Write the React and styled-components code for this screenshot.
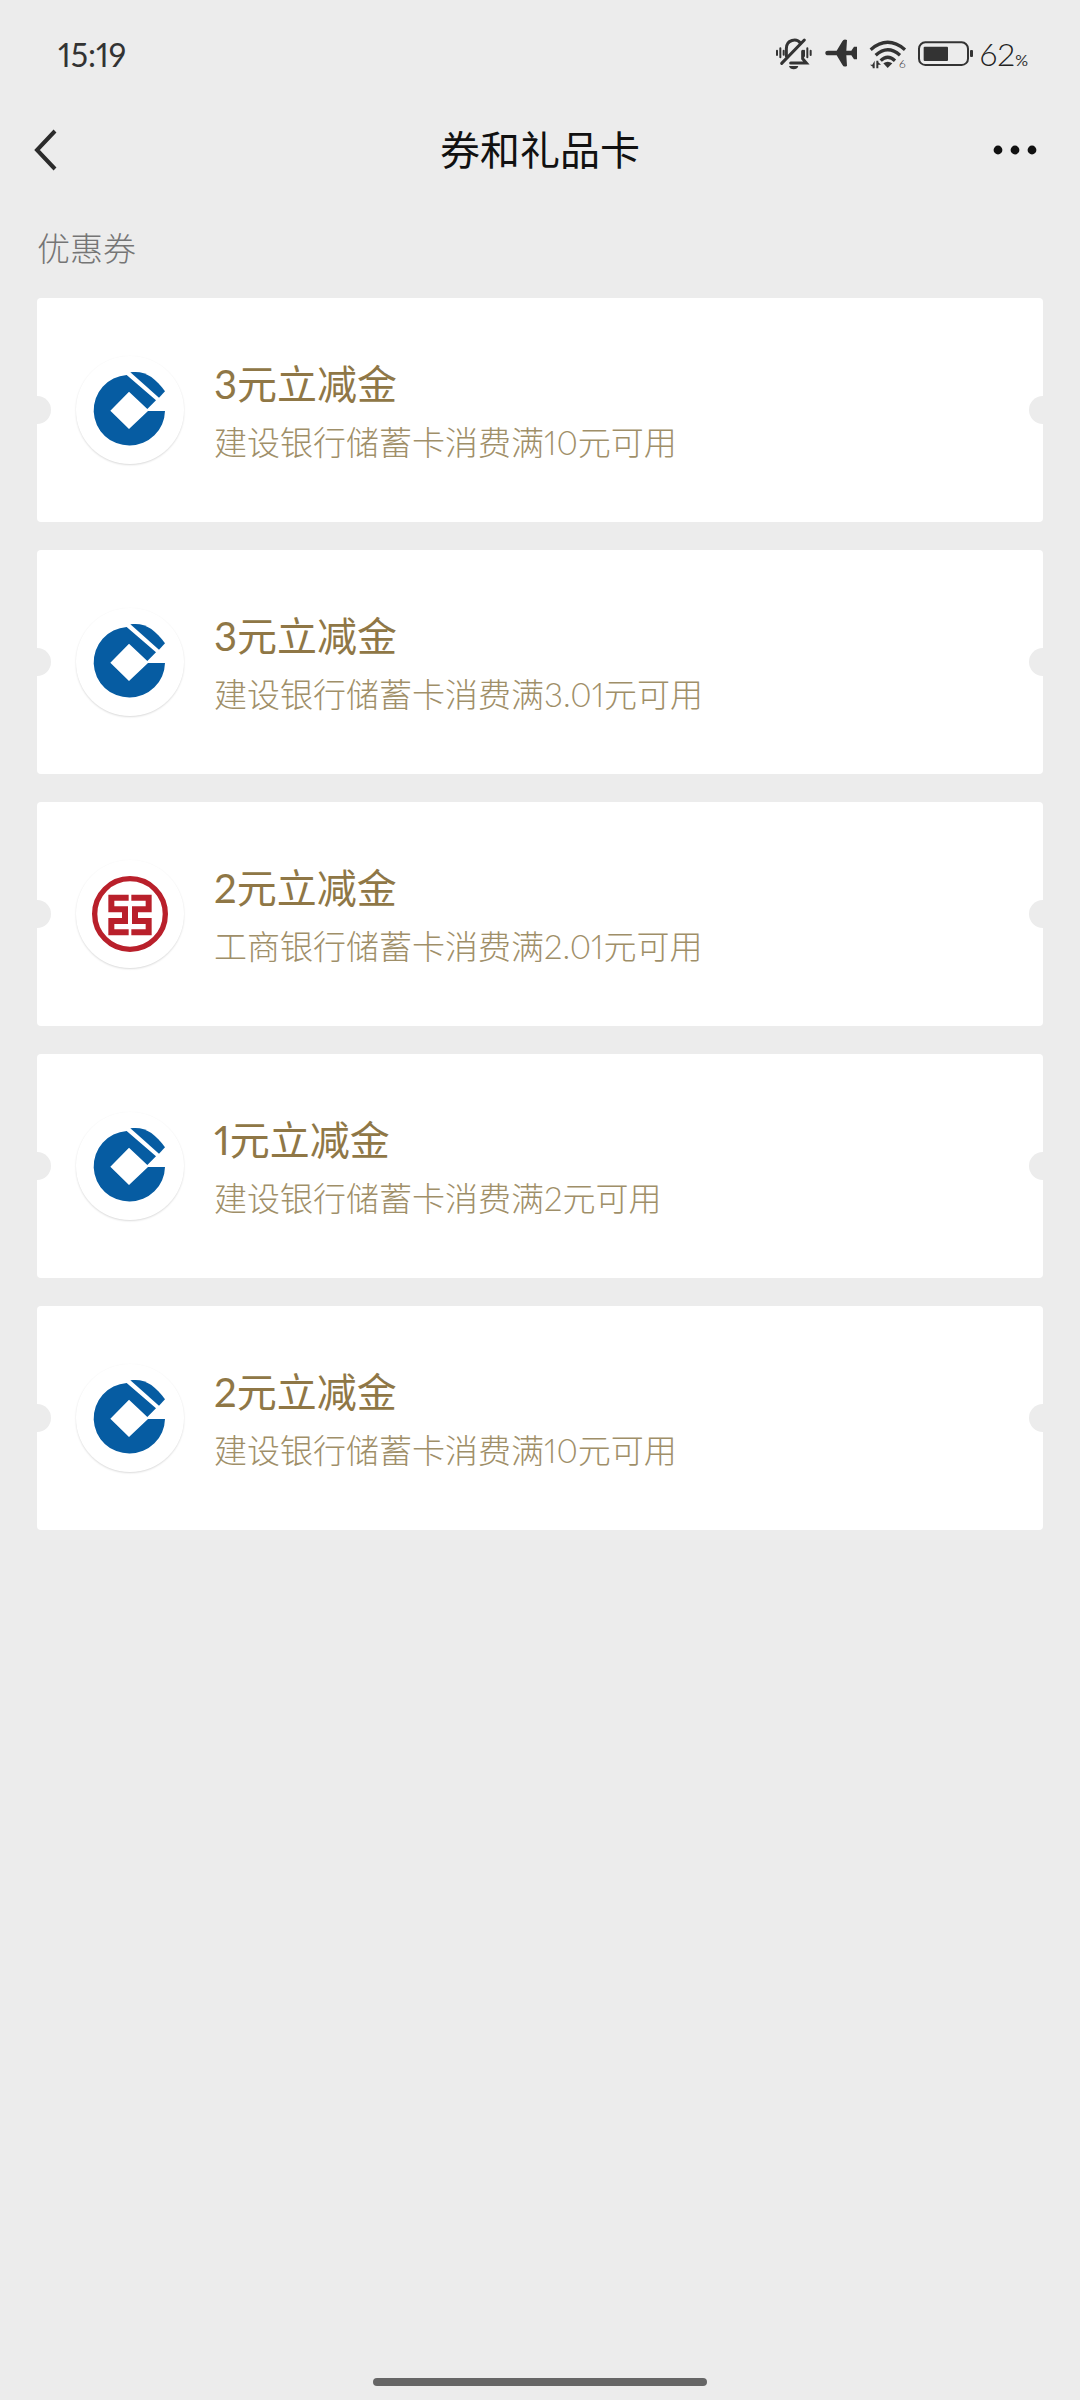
import React from "react";
import styled, { createGlobalStyle } from "styled-components";

const Global = createGlobalStyle`
  *, *::before, *::after { box-sizing: border-box; }
  body {
    margin: 0;
    background: #ececec;
    font-family: Lato, "Noto Sans CJK SC", sans-serif;
    font-feature-settings: "pnum";
  }
  h1, h2, h3, p, ul { margin: 0; padding: 0; font-weight: inherit; }
`;

const Screen = styled.div`
  min-height: 100vh;
  display: flex;
  flex-direction: column;
`;

const StatusBar = styled.div`
  display: flex;
  align-items: center;
  justify-content: space-between;
  height: 108px;
  padding: 0 52px 0 58px;
  font-size: 32px;
  color: #333;
`;

const StatusIcons = styled.div`
  display: flex;
  align-items: baseline;
  svg { align-self: center; }
`;

const Level = styled.span`
  font-size: 32px;
  font-weight: 300;
  color: #222;
`;

const Percent = styled.span`
  font-size: 16px;
`;

const NavBar = styled.header`
  display: grid;
  grid-template-columns: 1fr auto 1fr;
  align-items: center;
  height: 84px;
  padding: 0 32px;
`;

const NavTitle = styled.h1`
  font-size: 40px;
  line-height: 56px;
  color: #111;
`;

const NavButton = styled.button`
  justify-self: ${(p) => p.$side};
  display: flex;
  padding: 0;
  border: 0;
  background: none;
  cursor: pointer;
`;

const Main = styled.main`
  flex: 1;
  padding: 32px 37px;
`;

const SectionTitle = styled.h2`
  font-size: 33px;
  line-height: 48px;
  font-weight: 300;
  color: #757575;
`;

const CouponList = styled.ul`
  display: grid;
  gap: 28px;
  padding-top: 26px;
  list-style: none;
`;

const Coupon = styled.li`
  position: relative;
  display: flex;
  align-items: center;
  gap: 30px;
  height: 224px;
  padding: 0 39px;
  overflow: hidden;
  border-radius: 4px;
  background: #fff;

  &::before, &::after {
    content: "";
    position: absolute;
    top: 98px;
    width: 28px;
    height: 28px;
    border-radius: 50%;
    background: #ececec;
  }
  &::before { left: -14px; }
  &::after { right: -14px; }
`;

const Logo = styled.div`
  flex: none;
  width: 108px;
  height: 108px;
  border-radius: 50%;
  background: #fff;
  box-shadow: 0 1px 2px rgba(0, 0, 0, 0.15);
  svg { display: block; }
`;

const CouponText = styled.div`
  padding-top: 4px;
`;

const CouponName = styled.h3`
  font-size: 40px;
  line-height: 60px;
  color: #8f7746;
`;

const CouponRule = styled.p`
  font-size: 33px;
  line-height: 56px;
  font-weight: 300;
  color: #9f8f69;
`;

const HomeBar = styled.div`
  align-self: center;
  width: 334px;
  height: 8px;
  margin-bottom: 14px;
  border-radius: 4px;
  background: #666;
`;

const CcbLogo = () => (
  <svg width="108" height="108" viewBox="168 198 324 324" fill="#065ca2" aria-hidden="true">
    <path d="M435 363A107 106 0 1 1 320 255L408 331L382 357L327 305L271 362L327 417L384 363Z" />
    <path d="M331 247C374 240 405 262 435 304L417 323Z" />
  </svg>
);

const IcbcLogo = () => (
  <svg width="108" height="108" viewBox="48 30 324 324" fill="none" stroke="#b9202b" aria-hidden="true">
    <circle cx="210" cy="192" r="106" strokeWidth="16" />
    <g strokeWidth="18">
      <path d="M206 143H154V178H195V213H154V247H206" />
      <path d="M214 143H266V178H225V213H266V247H214" />
    </g>
  </svg>
);

const banks = { ccb: CcbLogo, icbc: IcbcLogo };

const coupons = [
  { bank: "ccb", name: "3元立减金", rule: "建设银行储蓄卡消费满10元可用" },
  { bank: "ccb", name: "3元立减金", rule: "建设银行储蓄卡消费满3.01元可用" },
  { bank: "icbc", name: "2元立减金", rule: "工商银行储蓄卡消费满2.01元可用" },
  { bank: "ccb", name: "1元立减金", rule: "建设银行储蓄卡消费满2元可用" },
  { bank: "ccb", name: "2元立减金", rule: "建设银行储蓄卡消费满10元可用" },
];

const StatusGlyphs = () => (
  <svg width="206" height="40" viewBox="0 0 618 120" fill="#333" aria-hidden="true">
    <g fill="none" stroke="#333" strokeLinecap="round">
      <path d="M9 50V63M19 43V70M29 50V62M90 50V66M100 43V70M110 50V63" strokeWidth="6" />
      <path d="M37 66V44C37 16 68 12 79 27M86 52V74L97 87H50" strokeWidth="9" />
      <path d="M23 88L91 18" strokeWidth="9" />
    </g>
    <path d="M45 96H73Q70 106 59 106Q48 106 45 96Z" />
    <path d="M154 57Q154 50 162 50H188L205 22Q209 14 219 18L217 50H232L240 38H249V76H240L232 64H217L219 96Q209 101 205 92L188 64H162Q154 64 154 57Z" />
    <g fill="none" stroke="#333" strokeWidth="10">
      <path d="M290 47Q341 3 393 47" />
      <path d="M305 64Q341 31 378 64" />
      <path d="M320 80Q341 60 363 80" />
    </g>
    <path d="M328 88Q341 78 355 88L341 102Z" />
    <path d="M288 92H295L302 80V103H296V98ZM307 80H313V85L321 92H313V103H307Z" />
    <text x="375" y="102" fontSize="36" fontWeight="300">6</text>
    <rect x="435" y="25" width="147" height="68" rx="19" fill="none" stroke="#333" strokeWidth="6" />
    <rect x="449" y="38" width="73" height="43" rx="3" />
    <rect x="588" y="48" width="9" height="21" rx="3" />
  </svg>
);

export default function App() {
  return (
    <Screen>
      <Global />
      <StatusBar>
        <span>15:19</span>
        <StatusIcons>
          <StatusGlyphs />
          <Level>62</Level>
          <Percent>%</Percent>
        </StatusIcons>
      </StatusBar>
      <NavBar>
        <NavButton $side="start" aria-label="返回">
          <svg width="28" height="44" viewBox="0 0 28 44" fill="none" stroke="#2b2b2b" strokeWidth="4" aria-hidden="true">
            <path d="M23 3L5 22L23 41" />
          </svg>
        </NavButton>
        <NavTitle>券和礼品卡</NavTitle>
        <NavButton $side="end" aria-label="更多">
          <svg width="56" height="20" viewBox="0 0 56 20" fill="#111" aria-hidden="true">
            <circle cx="6" cy="10" r="4.4" />
            <circle cx="23" cy="10" r="4.4" />
            <circle cx="40" cy="10" r="4.4" />
          </svg>
        </NavButton>
      </NavBar>
      <Main>
        <SectionTitle>优惠券</SectionTitle>
        <CouponList>
          {coupons.map(({ bank, name, rule }, i) => {
            const Bank = banks[bank];
            return (
              <Coupon key={i}>
                <Logo><Bank /></Logo>
                <CouponText>
                  <CouponName>{name}</CouponName>
                  <CouponRule>{rule}</CouponRule>
                </CouponText>
              </Coupon>
            );
          })}
        </CouponList>
      </Main>
      <HomeBar />
    </Screen>
  );
}
